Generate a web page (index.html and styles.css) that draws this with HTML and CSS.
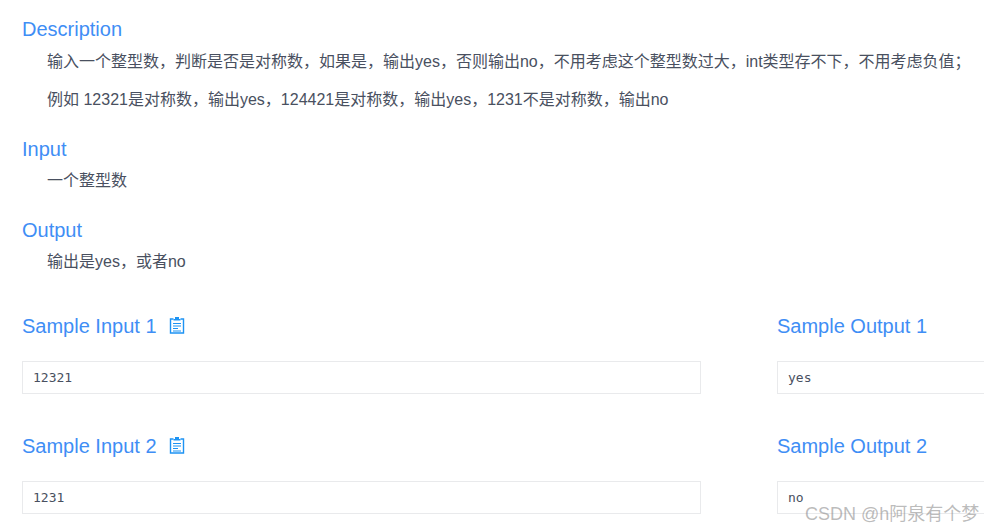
FILE: index.html
```html
<!DOCTYPE html>
<html lang="zh">
<head>
<meta charset="utf-8">
<title>Problem</title>
<link rel="stylesheet" href="styles.css">
</head>
<body>
<main class="problem">
  <section class="block first">
    <h2 class="title">Description</h2>
    <div class="content">
      <p>输入一个整型数，判断是否是对称数，如果是，输出yes，否则输出no，不用考虑这个整型数过大，int类型存不下，不用考虑负值；</p>
      <p>例如 12321是对称数，输出yes，124421是对称数，输出yes，1231不是对称数，输出no</p>
    </div>
  </section>
  <section class="block">
    <h2 class="title">Input</h2>
    <div class="content"><p>一个整型数</p></div>
  </section>
  <section class="block">
    <h2 class="title">Output</h2>
    <div class="content"><p>输出是yes，或者no</p></div>
  </section>
  <section class="samples">
    <div class="sample">
      <h2 class="title">Sample Input 1
        <svg class="copy" viewBox="0 0 16 18" width="16" height="18"><path d="M4.500 3H1.500v14h13V3h-3" fill="none" stroke="currentColor" stroke-width="1.4"/><path d="M4.500 4.500h7V3H10V1H6v2H4.500z" fill="currentColor"/><path d="M4 7.500h8M4 10h8M4 12.500h5M4 15h8" stroke="currentColor" stroke-width="1.200"/></svg>
      </h2>
      <pre class="code">12321</pre>
    </div>
    <div class="sample">
      <h2 class="title">Sample Output 1</h2>
      <pre class="code">yes</pre>
    </div>
    <div class="sample">
      <h2 class="title">Sample Input 2
        <svg class="copy" viewBox="0 0 16 18" width="16" height="18"><path d="M4.500 3H1.500v14h13V3h-3" fill="none" stroke="currentColor" stroke-width="1.4"/><path d="M4.500 4.500h7V3H10V1H6v2H4.500z" fill="currentColor"/><path d="M4 7.500h8M4 10h8M4 12.500h5M4 15h8" stroke="currentColor" stroke-width="1.200"/></svg>
      </h2>
      <pre class="code">1231</pre>
    </div>
    <div class="sample">
      <h2 class="title">Sample Output 2</h2>
      <pre class="code">no</pre>
    </div>
  </section>
</main>
<div class="watermark">CSDN @h阿泉有个梦</div>
</body>
</html>
```
FILE: styles.css
```css
html, body {
  margin: 0;
  padding: 0;
  height: 100%;
  overflow: hidden;
  background: #fff;
}
body {
  font-family: "Liberation Sans", "Noto Sans CJK SC", sans-serif;
  color: #495060;
}
.problem {
  width: 1456px;
  padding: 17px 0 0 22px;
}
.block {
  margin-bottom: 25px;
}
.title {
  margin: 0;
  font-size: 20px;
  font-weight: 400;
  line-height: 24px;
  color: #3f8ef5;
}
.content {
  padding: 8px 0 0 25px;
  font-size: 16px;
  line-height: 24px;
}
.first .content {
  padding-top: 9px;
}
.content p {
  margin: 0 0 14px;
}
.content p:last-child {
  margin-bottom: 0;
}
.samples {
  display: grid;
  grid-template-columns: 679px 679px;
  column-gap: 76px;
  row-gap: 40px;
  margin-top: 40px;
}
.sample .title {
  display: flex;
  align-items: center;
  gap: 12px;
  margin-bottom: 23px;
}
.copy {
  margin-top: -2px;
  color: #1d93f3;
}
.code {
  margin: 0;
  box-sizing: border-box;
  height: 33px;
  padding: 0 10px;
  border: 1px solid #e9eaec;
  font-family: "DejaVu Sans Mono", monospace;
  font-size: 13px;
  line-height: 31px;
  color: #495060;
}
.watermark {
  position: absolute;
  left: 805px;
  top: 503px;
  font-size: 18px;
  line-height: 22px;
  white-space: nowrap;
  color: rgba(130, 130, 130, 0.55);
}
```
